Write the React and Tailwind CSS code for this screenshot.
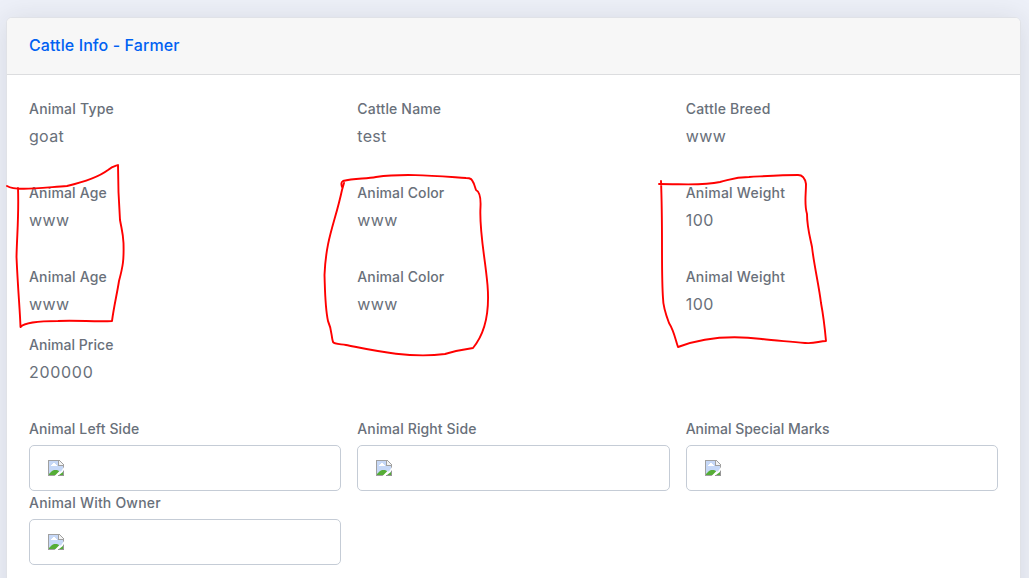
const label = "text-[14px] leading-[20px] font-medium whitespace-nowrap";
const value = "mt-[7px] h-[20px] text-[16px] leading-[20px] whitespace-nowrap";

function Field({ name, nameTracking, text, textTracking }) {
  return (
    <div>
      <div className={`${label} ${nameTracking}`}>{name}</div>
      <div className={`${value} ${textTracking}`}>{text}</div>
    </div>
  );
}

function MissingImage() {
  return (
    <svg width="16" height="16" viewBox="0 0 16 16" shapeRendering="crispEdges" aria-hidden="true">
      <path d="M0 0H11L16 5V16H0Z" fill="#a0a0a0" />
      <path d="M1 1H10V6H15V15H1Z" fill="#c6d8f7" />
      <path d="M11 1H12V2H13V3H14V4H15V5H11Z" fill="#f4f4f4" />
      <path d="M3 5H4V4H5V3H7V4H8V5H9V6H3Z" fill="#fff" />
      <path d="M1 15V14L4 11L6 10H9L11 11V15Z" fill="#55ad36" shapeRendering="auto" />
      <path d="M16 7V10L11 16H6.500L11 11.500H13Z" fill="#fff" shapeRendering="auto" />
      <path d="M11 15L15 12V15Z" fill="#55ad36" shapeRendering="auto" />
      <path d="M10 15H16V16H10ZM15 11H16V16H15Z" fill="#969696" />
    </svg>
  );
}

function Picture({ name, nameTracking }) {
  return (
    <div>
      <div className={`${label} ${nameTracking}`}>{name}</div>
      <div className="mt-[6px] flex h-[46px] items-center rounded-[5px] border border-[#c5ccd6] pl-[18px]">
        <MissingImage />
      </div>
    </div>
  );
}

const row = "grid grid-cols-3 gap-x-4";

export default function App() {
  return (
    <div className="relative h-[578px] w-[1029px] overflow-hidden bg-[#edf0f8] pt-[17px] pl-[6px] font-['Inter',sans-serif] text-[#69707a]">
      <main className="h-[620px] w-[1015px] overflow-hidden rounded-[6px] border border-[#e0e2e7] bg-white shadow-[0_2px_28px_0_rgba(33,40,50,0.11)]">
        <header className="flex h-[57px] items-center border-b border-[#dcdddf] bg-[#f7f7f7] px-[22px] pb-[2px]">
          <h1 className="text-[16px] leading-[20px] font-medium tracking-[0.1px] whitespace-nowrap text-[#0061f2]">Cattle Info - Farmer</h1>
        </header>
        <div className="px-[22px] pt-[24px]">
          <div className={row}>
            <Field name="Animal Type" nameTracking="tracking-[0.2px]" text="goat" textTracking="tracking-[0.3px]" />
            <Field name="Cattle Name" nameTracking="tracking-[0.17px]" text="test" textTracking="tracking-[0.3px]" />
            <Field name="Cattle Breed" nameTracking="tracking-[0.22px]" text="www" textTracking="tracking-[0.4px]" />
          </div>
          {[0, 1].map((i) => (
            <div key={i} className={`${row} mt-[37px]`}>
              <Field name="Animal Age" nameTracking="tracking-[0.17px]" text="www" textTracking="tracking-[0.4px]" />
              <Field name="Animal Color" nameTracking="tracking-[0.12px]" text="www" textTracking="tracking-[0.4px]" />
              <Field name="Animal Weight" nameTracking="tracking-[0.24px]" text="100" textTracking="tracking-[0.5px]" />
            </div>
          ))}
          <div className={`${row} mt-[21px]`}>
            <Field name="Animal Price" nameTracking="tracking-[0.04px]" text="200000" textTracking="tracking-[0.7px]" />
          </div>
          <div className={`${row} mt-[37px] gap-y-[2px]`}>
            <Picture name="Animal Left Side" nameTracking="tracking-[0.12px]" />
            <Picture name="Animal Right Side" nameTracking="tracking-[0.12px]" />
            <Picture name="Animal Special Marks" nameTracking="tracking-[0px]" />
            <Picture name="Animal With Owner" nameTracking="tracking-[0.2px]" />
          </div>
        </div>
      </main>
      <svg className="pointer-events-none absolute inset-0" width="1029" height="578" fill="none" stroke="#ff0000" strokeWidth="1.9" strokeLinecap="round" strokeLinejoin="round" aria-hidden="true">
        <path d="M7 186C15 191 38 188 67 186C84 182 100 176 108 170C113 166 116 166 118 165C118 180 119 206 120 220C122 231 123 233 123.500 243C124 260 123 266 119 281C117 294 114 306 112 321C96 322 76 320 58 321C42 321 25 322 20.500 327C20 311 18 291 16.500 257C17 234 19 215 18 188" />
        <path d="M342 187C341 184 341 182 343 181C354 178 366 179 376 177C405 173 436 176 466 178C472 178 472 180 474 184L476 190C480 192 481 197 480.500 207C479 231 485 256 487.500 285C490 315 483 336 473 348C466 349 455 351 445 354C407 359 367 349 346 345C340 344 334 344 333 342C331 335 332 330 328 321C325 307 325 289 324.500 275C326 238 335 223 342 190L344 183" />
        <path d="M659 184C685 184 702 186 720 182C732 179 735 177 749 177C768 176 782 175 798 175C803 175 805 178 806 184C806 195 804 204 807 214C807 227 810 237 812 247C814 265 819 286 821 303C824 319 825 330 826 341C819 341 815 344 805 343C788 341 776 341 762 339C730 335 704 337 678 347C675 338 674 331 669 323C666 315 663 306 663 298C661 270 663 230 661 181" />
      </svg>
    </div>
  );
}
